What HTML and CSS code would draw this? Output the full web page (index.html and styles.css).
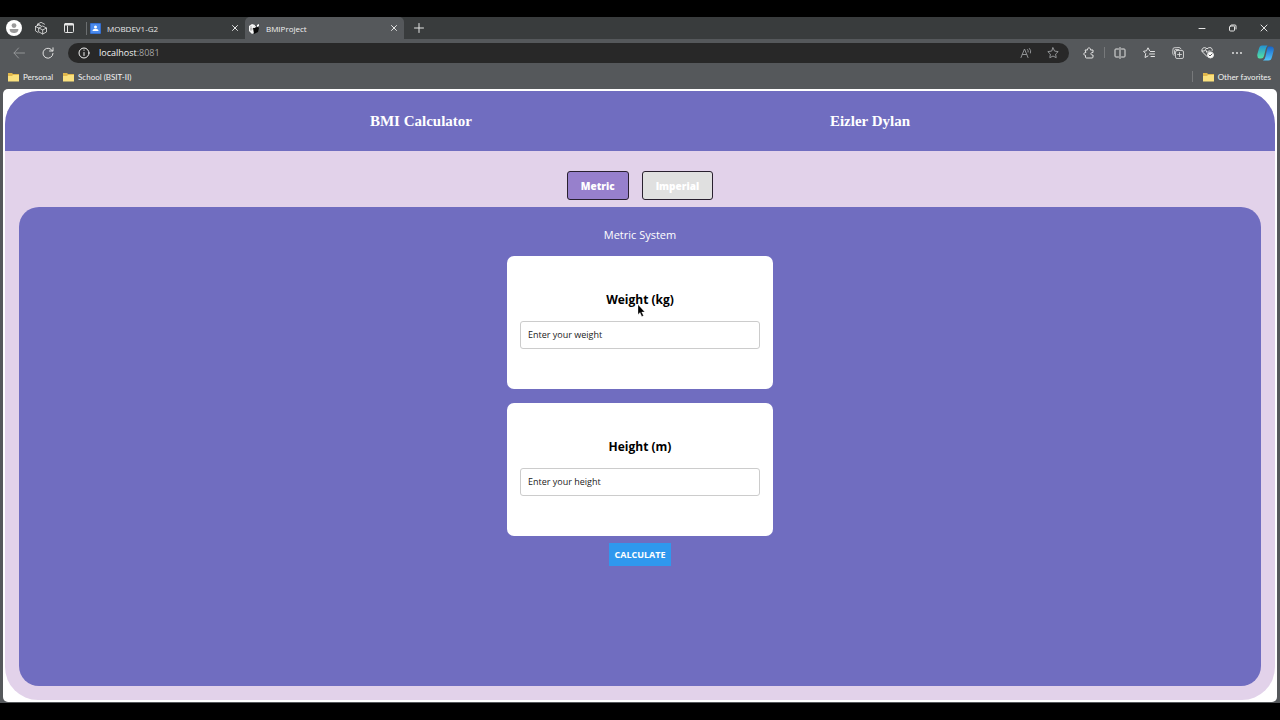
FILE: index.html
```html
<!DOCTYPE html>
<html lang="en">
<head>
<meta charset="utf-8">
<title>BMIProject</title>
<link rel="stylesheet" href="styles.css">
</head>
<body>
<div class="browser">
  <div class="tab-strip">
    <div class="strip-tools">
      <button class="icon-button" aria-label="Profile"><svg width="18" height="18" viewBox="0 0 18 18"><circle cx="9" cy="9" r="8" fill="#fff"/><circle cx="9" cy="6.600" r="2.400" fill="#9a9a9a"/><path d="M4.600 10h8.800c0 3-2 4-4.400 4s-4.400-1-4.400-4z" fill="#9a9a9a"/></svg></button>
      <button class="icon-button" aria-label="Workspaces"><svg width="14" height="14" viewBox="0 0 14 14" class="line thin"><path d="M3.500 4.500V3.200L7 1.300l3.500 1.900M3.500 3.200L5.500 4.200M1.500 5.500v4.300l2.500 1.700M1.500 5.500L5 3.700l2 1M1.500 5.500L4.500 7M5 7l3.700-2 3.800 2v4L8.700 13 5 11zM5 7l3.700 2 3.800-2M8.700 9v4"/></svg></button>
      <button class="icon-button" aria-label="Tab actions"><svg width="12" height="12" viewBox="0 0 12 12" class="line"><rect x="1.500" y="1.500" width="9" height="9" rx="1"/><path d="M2 2.500h8" stroke-width="2"/><path d="M4.500 4v6.500"/></svg></button>
    </div>
    <div class="tab">
      <svg width="11" height="11" viewBox="0 0 11 11"><rect y="0" width="11" height="11" rx="1" fill="#356fd0"/><rect x="1" y="1" width="9" height="9" fill="#4b8bed"/><circle cx="5.500" cy="4" r="1.500" fill="#fff"/><path d="M2.500 8c0-3 6-3 6 0z" fill="#fff"/></svg>
      <span class="tab-title">MOBDEV1-G2</span>
      <button class="icon-button" aria-label="Close MOBDEV1-G2"><svg width="8" height="8" viewBox="0 0 8 8" class="line"><path d="M1.500 1.500l5 5M6.500 1.500l-5 5"/></svg></button>
    </div>
    <div class="tab tab-active">
      <svg width="11" height="11" viewBox="0 0 11 11"><path d="M0 3l3-2 3 1-1 8-2 1-3-3z" fill="#f5f5f5"/><path d="M4 5l5-1 1 1-1 4-4 2z" fill="#080808"/><path d="M5 4l2-1v1l-2 1zM8 2l2-1v2l-2 1z" fill="#fff"/><path d="M1 6h3M2 3v5" stroke="#666" stroke-width=".5"/></svg>
      <span class="tab-title">BMIProject</span>
      <button class="icon-button" aria-label="Close BMIProject"><svg width="8" height="8" viewBox="0 0 8 8" class="line"><path d="M1.500 1.500l5 5M6.500 1.500l-5 5"/></svg></button>
    </div>
    <button class="icon-button new-tab" aria-label="New tab"><svg width="12" height="12" viewBox="0 0 12 12" class="line"><path d="M6 1.500v9M1.500 6h9"/></svg></button>
    <div class="window-controls">
      <button class="icon-button" aria-label="Minimize"><svg width="8" height="8" viewBox="0 0 8 8" class="line"><path d="M1 4.500h6"/></svg></button>
      <button class="icon-button" aria-label="Restore"><svg width="8" height="8" viewBox="0 0 8 8" class="line"><rect x=".5" y="2" width="5" height="5" rx="1"/><path d="M2.500 1h3.500q1 0 1 1v3"/></svg></button>
      <button class="icon-button" aria-label="Close window"><svg width="8" height="8" viewBox="0 0 8 8" class="line"><path d="M1 1l6 6M7 1L1 7"/></svg></button>
    </div>
  </div>

  <div class="toolbar">
    <div class="nav-tools">
      <button class="icon-button dim" aria-label="Back"><svg width="12" height="12" viewBox="0 0 12 12" class="line"><path d="M11.500 6H1M5.500 1L1 6l4.500 5"/></svg></button>
      <button class="icon-button" aria-label="Refresh"><svg width="12" height="12" viewBox="0 0 12 12" class="line"><path d="M10.500 4A5 5 0 1 0 11 6.500M11 .8V4H7.500"/></svg></button>
    </div>
    <div class="address">
      <svg width="12" height="12" viewBox="0 0 12 12" class="line"><circle cx="6" cy="6" r="5"/><path d="M6 5.500v3M6 3v.3"/></svg>
      <span class="address-text">localhost<span class="port">:8081</span></span>
      <button class="icon-button dim" aria-label="Read aloud"><svg width="12" height="12" viewBox="0 0 12 12" class="line"><path d="M1 10.500L4.500 2 8 10.500M2.300 7.500h4.400M7.500 2.500q1 1 .7 2.500M9.500 1.500q2 2 1 4.500"/></svg></button>
      <button class="icon-button dim" aria-label="Add to favorites"><svg width="12" height="12" viewBox="0 0 12 12" class="line"><path d="M6 .8l1.600 3.300 3.600.5-2.600 2.500.6 3.600L6 9l-3.200 1.700.6-3.600L.8 4.600l3.600-.5z"/></svg></button>
    </div>
    <div class="tools">
      <button class="icon-button" aria-label="Extensions"><svg width="12" height="12" viewBox="0 0 12 12" class="line"><path d="M2.500 3h2C4 .2 8 .2 7.500 3H10v2.500C7.200 5 7.200 8.500 10 8v2q0 1-1 1H3.500q-1 0-1-1V8.300C.2 8.500.2 5.300 2.500 5.500z"/></svg></button>
      <span class="divider"></span>
      <button class="icon-button" aria-label="Split screen"><svg width="12" height="12" viewBox="0 0 12 12" class="line"><path d="M6 .5v11M4.500 2H1.800Q1 2 1 2.800v6.400q0 .8.800.8h2.700M7.500 2h2.700q.8 0 .8.800v6.400q0 .8-.8.800H7.500"/></svg></button>
      <button class="icon-button" aria-label="Favorites"><svg width="12" height="12" viewBox="0 0 12 12" class="line"><path d="M6.600 3.800L5 .8 3.500 3.800.5 4.300 2.700 6.500 2 10.500l3-1.500M7.500 4.500h4M6.500 7h5M8 9.500h3.500"/></svg></button>
      <button class="icon-button" aria-label="Collections"><svg width="12" height="12" viewBox="0 0 12 12" class="line thin"><rect x="3.500" y="3.500" width="8" height="8" rx="1.500"/><path d="M7.500 5.500v4M5.500 7.500h4M2 8.500Q.8 7.500.7 6L1 2Q1 1 2 .8L7 .5q1.500 0 2 1.500M2.500 7V3.500Q2.500 2.500 4 2.500h3"/></svg></button>
      <button class="icon-button" aria-label="Browser essentials"><svg width="13" height="13" viewBox="0 0 13 13" class="line"><path d="M6 10.500L1.500 6C-.5 3 3 0 6 2.800 9 0 12.500 2.500 11 5M1 5h2.500l1-1.500 1.500 3L7.500 5H9"/><circle cx="9.500" cy="9" r="3" fill="#fff"/><path d="M8 9l1 1 2-2" stroke="#555"/></svg></button>
      <button class="icon-button" aria-label="Settings and more"><svg width="12" height="12" viewBox="0 0 12 12"><g fill="#eee"><circle cx="2" cy="6" r=".9"/><circle cx="6" cy="6" r=".9"/><circle cx="10" cy="6" r=".9"/></g></svg></button>
      <button class="icon-button" aria-label="Copilot"><svg width="17" height="16" viewBox="0 0 17 16"><defs><linearGradient id="teal" x2="0" y2="1"><stop stop-color="#2491d0"/><stop offset="1" stop-color="#54e2a3"/></linearGradient><linearGradient id="blue" x2="0" y2="1"><stop stop-color="#1764c8"/><stop offset="1" stop-color="#52c5fb"/></linearGradient></defs><path d="M5 .5h5.500Q9 2 8.500 5L7 11Q6.500 13.500 4 13.500H2.500Q-.3 13 .4 9L2 3.500Q2.700.5 5 .5z" fill="url(#teal)"/><path d="M11.500 1.500H14q3.300.3 2.700 4L15 12q-.7 3.500-3.500 3.500H6Q8 14.500 8.500 11.500L10 4.500Q10.500 2 11.500 1.500z" fill="url(#blue)"/></svg></button>
    </div>
  </div>

  <div class="bookmarks">
    <a class="bookmark" href="#"><svg width="11" height="10" viewBox="0 0 11 10"><path d="M0 1h4l1 1h6v7H0z" fill="#e0b74c"/><path d="M0 4h4l1-1h6v6.500H0z" fill="#fae17e"/></svg>Personal</a>
    <a class="bookmark" href="#"><svg width="11" height="10" viewBox="0 0 11 10"><path d="M0 1h4l1 1h6v7H0z" fill="#e0b74c"/><path d="M0 4h4l1-1h6v6.500H0z" fill="#fae17e"/></svg>School (BSIT-II)</a>
    <span class="divider push"></span>
    <a class="bookmark" href="#"><svg width="11" height="10" viewBox="0 0 11 10"><path d="M0 1h4l1 1h6v7H0z" fill="#e0b74c"/><path d="M0 4h4l1-1h6v6.500H0z" fill="#fae17e"/></svg>Other favorites</a>
  </div>

  <div class="viewport">
    <div class="app">
      <header class="app-header"><span>BMI Calculator</span><span>Eizler Dylan</span></header>
      <div class="switch">
        <button class="mode mode-active">Metric</button>
        <button class="mode">Imperial</button>
      </div>
      <main class="panel">
        <h1 class="panel-title">Metric System</h1>
        <form class="form">
          <div class="card">
            <label class="card-label" for="weight">Weight (kg)</label>
            <input class="field" id="weight" type="text" placeholder="Enter your weight">
            <svg class="pointer" width="8" height="13" viewBox="0 0 8 13"><path d="M1 .5v10l2-2 1.800 4 1.700-.8L4.700 8h3z" fill="#000" stroke="#fff" stroke-width=".3"/></svg>
          </div>
          <div class="card">
            <label class="card-label" for="height">Height (m)</label>
            <input class="field" id="height" type="text" placeholder="Enter your height">
          </div>
          <button class="calculate" type="button">CALCULATE</button>
        </form>
      </main>
    </div>
  </div>
</div>
</body>
</html>
```
FILE: styles.css
```css
* { box-sizing: border-box; }
body {
  margin: 0;
  background: #000;
  color: #f2f2f2;
  font-family: "Open Sans", "Noto Sans", sans-serif;
}
button, input { font-family: inherit; }
.browser {
  display: flex;
  flex-direction: column;
  min-height: 100vh;
  padding: 17px 0;
  background: #55585b;
  background-clip: content-box;
}
.line {
  fill: none;
  stroke: currentColor;
  stroke-linecap: round;
  stroke-linejoin: round;
}
.thin { stroke-width: .8; }
.icon-button {
  display: flex;
  align-items: center;
  justify-content: center;
  padding: 0;
  border: 0;
  background: none;
  color: #e4e4e4;
}
.dim { color: #929496; }

.tab-strip {
  display: flex;
  align-items: stretch;
  height: 22px;
  background: #393c3d;
}
.strip-tools {
  display: flex;
  align-items: center;
  gap: 15px;
  padding: 0 11px 0 5px;
}
.strip-tools::after {
  width: 1px;
  height: 13px;
  margin: 0 -12px 0 -4px;
  background: #6b6e70;
  content: "";
}
.strip-tools .icon-button:first-child { margin-right: -4px; }
.tab {
  display: flex;
  align-items: center;
  width: 159px;
  padding: 0 6px 0 4px;
  font-size: 8px;
}
.tab:not(.tab-active) { color: #e8e8e8; }
.tab-active {
  border-radius: 5px 5px 0 0;
  background: #55585b;
}
.tab-title { flex: 1; padding-left: 6px; }
.new-tab { width: 29px; }
.window-controls {
  display: flex;
  gap: 23px;
  margin-left: auto;
  padding-right: 12px;
}

.toolbar {
  display: flex;
  align-items: center;
  height: 27px;
}
.nav-tools {
  display: flex;
  gap: 17px;
  padding: 0 14px 0 13px;
}
.address {
  display: flex;
  flex: 1;
  align-items: center;
  gap: 15px;
  height: 20px;
  padding: 0 10px;
  border-radius: 10px;
  background: #282828;
}
.address-text {
  flex: 1;
  margin-left: -6px;
  font-size: 9px;
}
.port { color: #a4a4a4; }
.tools {
  display: flex;
  align-items: center;
  gap: 17px;
  padding: 0 6px 0 14px;
}
.tools .divider { margin: 0 -8px; }
.tools .icon-button:last-child { margin-left: -3px; }
.divider { width: 1px; height: 11px; background: #77797b; }

.bookmarks {
  display: flex;
  align-items: center;
  gap: 10px;
  height: 23px;
  padding: 0 9px 2px 8px;
}
.bookmark {
  display: flex;
  align-items: center;
  gap: 4px;
  color: #f2f2f2;
  font-family: Lato, "Open Sans", sans-serif;
  font-size: 8px;
  text-decoration: none;
}
.push { margin-left: auto; }

.viewport {
  display: flex;
  flex: 1;
  margin: 0 3px 1px;
  padding: 2px;
  border-radius: 5px;
  background: #fff;
}
.app {
  display: flex;
  flex: 1;
  flex-direction: column;
  padding-bottom: 14px;
  border-radius: 33px;
  overflow: hidden;
  background: #e2d2ea;
}
.app-header {
  display: flex;
  align-items: center;
  justify-content: space-evenly;
  height: 60px;
  padding: 0 7px;
  background: #706dc0;
  color: #fff;
  font: bold 15px "Liberation Serif", serif;
}
.switch {
  display: flex;
  justify-content: center;
  gap: 13px;
  padding: 20px 0 7px;
}
.mode {
  height: 29px;
  padding: 0 13px;
  border: 1px solid #29202f;
  border-radius: 3px;
  background: #e0e0e0;
  color: #fff;
  font-size: 10px;
  font-weight: 800;
}
.mode-active { background: #9780cc; }
.panel {
  flex: 1;
  margin: 0 14px;
  padding-top: 20px;
  border-radius: 20px;
  background: #706dc0;
}
.panel-title {
  margin: 0 0 13px;
  color: #fff;
  font-size: 11px;
  font-weight: normal;
  line-height: 16px;
  text-align: center;
}
.form {
  display: flex;
  flex-direction: column;
  align-items: center;
}
.card {
  position: relative;
  display: flex;
  flex-direction: column;
  justify-content: center;
  width: 266px;
  height: 133px;
  margin-bottom: 14px;
  padding: 0 13px 6px;
  border-radius: 7px;
  background: #fff;
}
.card-label {
  margin-bottom: 12px;
  color: #000;
  font-size: 12px;
  font-weight: bold;
  line-height: 18px;
  text-align: center;
}
.field {
  width: 100%;
  height: 28px;
  padding: 0 7px;
  border: 1px solid #ccc;
  border-radius: 3px;
  font-size: 9px;
}
.field::placeholder { color: #222; opacity: 1; }
.pointer { position: absolute; top: 48px; left: 130px; }
.calculate {
  height: 23px;
  margin-top: -7px;
  padding: 0 5px;
  border: 0;
  background: #2f98ee;
  color: #fff;
  font-size: 9px;
  font-weight: bold;
}
```
